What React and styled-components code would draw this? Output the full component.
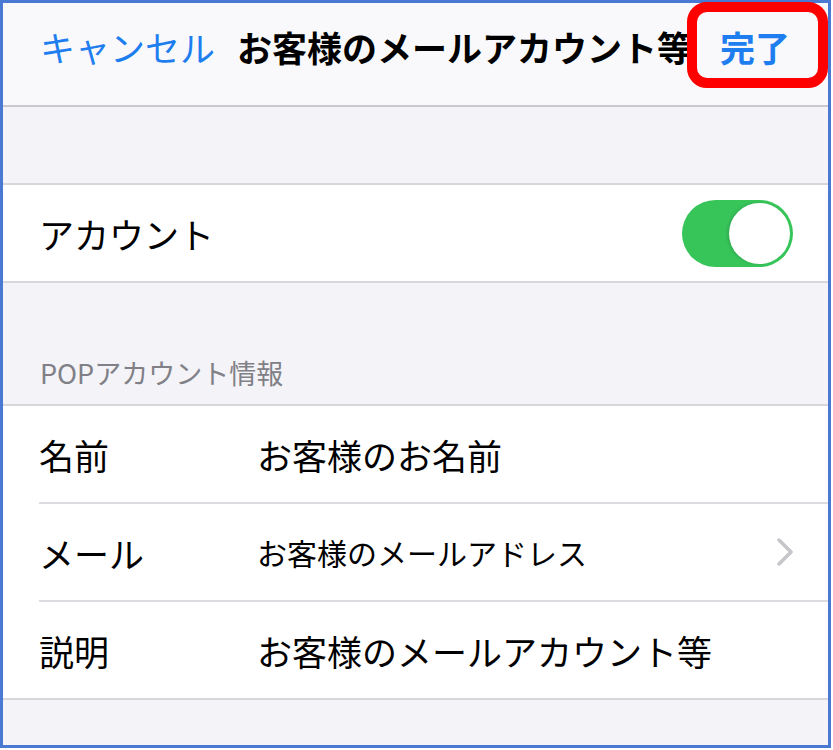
import styled, { createGlobalStyle } from 'styled-components';

const GlobalStyle = createGlobalStyle`
  html, body {
    margin: 0;
    padding: 0;
    background: #ffffff;
  }
  body {
    font-family: "Noto Sans CJK JP", "Noto Sans", sans-serif;
  }
`;

function App() {
  return (
    <>
      <GlobalStyle />
      <Frame>
        <NavBar>
          <NavButton>キャンセル</NavButton>
          <NavTitle>お客様のメールアカウント等</NavTitle>
          <NavButton bold>完了</NavButton>
        </NavBar>
        <Highlight />

        <Spacer height={76} />

        <Group>
          <Item>
            <ItemInner last>
              <Label>アカウント</Label>
              <Switch>
                <Knob />
              </Switch>
            </ItemInner>
          </Item>
        </Group>

        <SectionHeader>POPアカウント情報</SectionHeader>

        <Group>
          <Item>
            <ItemInner>
              <Label>名前</Label>
              <Value>お客様のお名前</Value>
            </ItemInner>
          </Item>
          <Item>
            <ItemInner>
              <Label>メール</Label>
              <Value small>お客様のメールアドレス</Value>
              <Chevron viewBox="0 0 16 28">
                <polyline points="2,2 14,14 2,26" />
              </Chevron>
            </ItemInner>
          </Item>
          <Item>
            <ItemInner last>
              <Label>説明</Label>
              <Value>お客様のメールアカウント等</Value>
            </ItemInner>
          </Item>
        </Group>
      </Frame>
    </>
  );
}

const Frame = styled.div`
  position: relative;
  box-sizing: border-box;
  width: 831px;
  height: 748px;
  border: 3px solid #4a79d3;
  background: #f3f3f8;
`;

const NavBar = styled.div`
  box-sizing: border-box;
  height: 104px;
  display: flex;
  align-items: center;
  padding: 0 38px 16px 37px;
  background: #f9f9fb;
  border-bottom: 2px solid #c9c9ce;
  gap: 22px;
`;

const NavButton = styled.div`
  font-size: 35px;
  font-weight: ${(p) => (p.bold ? 700 : 400)};
  color: #1e7ef0;
  white-space: nowrap;
  line-height: 1;
`;

const NavTitle = styled.div`
  flex: 1;
  font-size: 35px;
  font-weight: 700;
  color: #000000;
  white-space: nowrap;
  line-height: 1;
`;

const Highlight = styled.div`
  position: absolute;
  top: -1px;
  left: 684px;
  width: 141px;
  height: 86px;
  box-sizing: border-box;
  border: 10px solid #ff0000;
  border-radius: 20px;
  pointer-events: none;
`;

const Spacer = styled.div`
  height: ${(p) => p.height}px;
`;

const Group = styled.div`
  background: #ffffff;
  border-top: 2px solid #d6d6db;
  border-bottom: 2px solid #d6d6db;
`;

const Item = styled.div`
  padding-left: 36px;
`;

const ItemInner = styled.div`
  box-sizing: border-box;
  height: ${(p) => (p.last ? '96px' : '98px')};
  display: flex;
  align-items: center;
  padding-right: 35px;
  border-bottom: ${(p) => (p.last ? 'none' : '2px solid #dcdce0')};
`;

const Label = styled.div`
  width: 218px;
  flex: none;
  font-size: 35px;
  color: #000000;
  line-height: 1;
  white-space: nowrap;
`;

const Value = styled.div`
  flex: 1;
  font-size: ${(p) => (p.small ? '30px' : '35px')};
  color: #000000;
  line-height: 1;
  white-space: nowrap;
`;

const Switch = styled.div`
  margin-left: auto;
  position: relative;
  width: 111px;
  height: 67px;
  border-radius: 34px;
  background: #37c55a;
`;

const Knob = styled.div`
  position: absolute;
  top: 3px;
  right: 3px;
  width: 61px;
  height: 61px;
  border-radius: 50%;
  background: #ffffff;
  box-shadow: -2px 0 3px rgba(0, 0, 0, 0.12);
`;

const Chevron = styled.svg`
  width: 16px;
  height: 28px;
  flex: none;
  fill: none;
  stroke: #c5c5ca;
  stroke-width: 3.5;
  stroke-linecap: round;
  stroke-linejoin: round;
`;

const SectionHeader = styled.div`
  box-sizing: border-box;
  height: 121px;
  display: flex;
  align-items: flex-end;
  padding: 0 0 18px 37px;
  font-size: 27px;
  color: #808086;
  line-height: 1;
  white-space: nowrap;
`;

export default App;
